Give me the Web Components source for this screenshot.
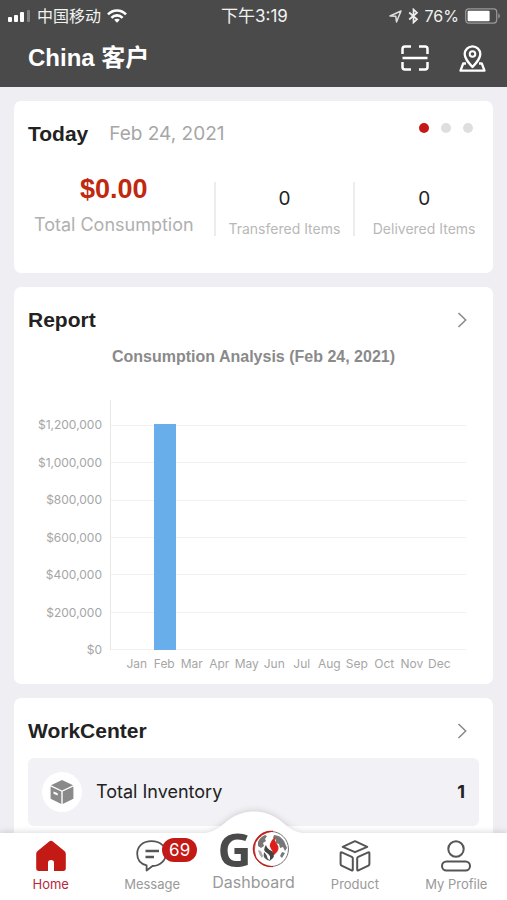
<!DOCTYPE html>
<html lang="en">
<head>
<meta charset="utf-8">
<meta name="viewport" content="width=device-width">
<title>Dashboard</title>
<style>
 html {
  --fontTitle: "Liberation Sans", "Noto Sans CJK SC", sans-serif;
  --fontText: Inter, "Noto Sans CJK SC", sans-serif;
  --red: #c41a16;
  --bar: #4a4a4a;
  --page: #eeeef3;
  --muted: #a6a6a6;
  height: 100%;
 }
 body {
  margin: 0;
  height: 100%;
  background: var(--page);
  color: #222;
  font-family: var(--fontText);
 }
</style>
</head>
<body>
<app-shell>
 <status-bar slot="top" carrier="中国移动" time="下午3:19" battery="76%"></status-bar>
 <app-header slot="top">China 客户</app-header>

 <info-card>
  <span slot="title">Today</span>
  <span slot="note">Feb 24, 2021</span>
  <page-dots slot="action" total="3"></page-dots>
  <stat-row>
   <stat-cell main value="$0.00">Total Consumption</stat-cell>
   <stat-cell value="0">Transfered Items</stat-cell>
   <stat-cell value="0">Delivered Items</stat-cell>
  </stat-row>
 </info-card>

 <info-card>
  <span slot="title">Report</span>
  <more-link slot="action" label="Open report"></more-link>
  <bar-chart values="0,1208000,0,0,0,0,0,0,0,0,0,0" step="200000">Consumption Analysis (Feb 24, 2021)</bar-chart>
 </info-card>

 <info-card>
  <span slot="title">WorkCenter</span>
  <more-link slot="action" label="Open work center"></more-link>
  <work-item count="1">Total Inventory</work-item>
 </info-card>

 <tab-bar slot="bottom">
  <tab-item icon="home" active>Home</tab-item>
  <tab-item icon="message" badge="69">Message</tab-item>
  <tab-item icon="logo">Dashboard</tab-item>
  <tab-item icon="product">Product</tab-item>
  <tab-item icon="profile">My Profile</tab-item>
 </tab-bar>
</app-shell>

<script>
/** Dibujos compartidos por los elementos. */
const ICONS = {
 signal: /* html */ `<svg width="23" height="12" viewBox="0 0 23 12" fill="#fff">
   <rect x="0" y="7" width="4" height="5" rx="1"/><rect x="6" y="5" width="4" height="7" rx="1"/>
   <rect x="12" y="2" width="4" height="10" rx="1"/><rect x="19" y="0" width="3" height="12" rx="1" opacity=".3"/>
  </svg>`,
 wifi: /* html */ `<svg width="20" height="14" viewBox="0 0 20 14" fill="none" stroke="#fff" stroke-width="2.6">
   <path d="M1 5.4C6 .2 14 .2 19 5.4"/><path d="M4.4 8.8c3.2-3.2 8-3.2 11.2 0"/>
   <path d="M7.2 10.8c1.6-1.5 4-1.5 5.6 0L10 13.8z" fill="#fff" stroke="none"/>
  </svg>`,
 arrow: /* html */ `<svg width="13" height="13" viewBox="0 0 13 13" fill="none" stroke="#ddd" stroke-width="1.5" stroke-linejoin="round">
   <path d="M1 6 12 1 7.5 12 6.8 6.3z"/>
  </svg>`,
 bluetooth: /* html */ `<svg width="11" height="16" viewBox="0 0 11 16" fill="none" stroke="#eee" stroke-width="1.7">
   <path d="M1.2 4.5 9 11.3 5.500 14.500V1.500L9 4.7 1.2 11.5"/>
  </svg>`,
 battery: /* html */ `<svg width="36" height="16" viewBox="0 0 36 16">
   <rect x=".7" y=".9" width="31" height="14.2" rx="3" fill="none" stroke="#999" stroke-width="1.2"/>
   <rect x="2.6" y="2.8" width="22" height="10.4" rx="1" fill="#fff"/>
   <path d="M33.3 5.500c2 .6 2 4.4 0 5z" fill="#999"/>
  </svg>`,
 scan: /* html */ `<svg width="28" height="26" viewBox="0 0 28 26" fill="none" stroke="#fff" stroke-width="2.5">
   <path d="M1.500 9V4q0-2.500 2.500-2.500h6M18 1.500h6q2.500 0 2.500 2.500v5M1.500 17v5q0 2.500 2.500 2.500h6M18 24.500h6q2.500 0 2.500-2.500v-5M1.500 13h25"/>
  </svg>`,
 pin: /* html */ `<svg width="27" height="27" viewBox="0 0 27 27" fill="none" stroke="#fff" stroke-width="2.3" stroke-linejoin="round">
   <path d="M13.5 22C9 17 5.700 13.500 5.700 9.200a7.800 7.800 0 0 1 15.600 0C21.300 13.500 18 17 13.500 22z"/>
   <circle cx="13.5" cy="9" r="2.800" stroke-width="2"/>
   <path d="M7 18.500H4.200L1.500 25.700h24l-2.700-7.200H20"/>
  </svg>`,
 chevron: /* html */ `<svg width="10" height="16" viewBox="0 0 10 16" fill="none" stroke="#888" stroke-width="1.5">
   <path d="M1.500 1 8.700 8 1.500 15"/>
  </svg>`,
 box: /* html */ `<svg width="24" height="26" viewBox="0 0 24 26" fill="#8a8a8a">
   <path d="M12 1 23 6.200 12 11.400 1 6.200z"/>
   <path d="M.6 7.600 11.300 12.600V25L.6 19.800zM3.500 12.400v2.300l4.200 1.900v-2.300z" fill-rule="evenodd"/>
   <path d="M23.400 7.600 12.700 12.600V25l10.700-5.200z"/>
  </svg>`,
 home: /* html */ `<svg width="32" height="32" viewBox="0 0 32 32" fill="#c41a16">
   <path d="M14.200 1.400q1.800-1.300 3.600 0L29.400 11q1.400 1.200 1.400 3v14.300q0 2.700-2.700 2.700H19v-8.500q0-2.500-3-2.500t-3 2.500V31H3.900q-2.700 0-2.700-2.700V14q0-1.800 1.400-3z"/>
  </svg>`,
 message: /* html */ `<svg width="32" height="32" viewBox="0 0 32 32" fill="none" stroke="#555" stroke-width="1.8" stroke-linejoin="round">
   <path d="M10.600 30.500V25.400C4.600 23.800 1.200 19.200 1.200 13.700 1.200 6.200 7 1.200 15.500 1.200S30 6.200 30 13.500C30 20 24.500 25.600 16.500 26z"/>
   <path d="M9.500 11h13.500M9.500 17h8.500" stroke-width="2.4"/>
  </svg>`,
 product: /* html */ `<svg width="32" height="32" viewBox="0 0 32 32" fill="none" stroke="#555" stroke-width="2" stroke-linejoin="round">
   <path d="M16 1.200 28.300 6.800 16 12.200 3.700 6.800z"/>
   <path d="M2.800 12.300q-1.200-.5-1.200.8v11q0 1 1 1.500l10 4.800q1.200.5 1.200-.8V18.300q0-1-1-1.500z"/>
   <path d="M29.200 12.300q1.200-.5 1.200.8v11q0 1-1 1.500l-10 4.800q-1.200.5-1.200-.8V18.300q0-1 1-1.500z"/>
  </svg>`,
 profile: /* html */ `<svg width="32" height="32" viewBox="0 0 32 32" fill="none" stroke="#555" stroke-width="2">
   <circle cx="16" cy="9" r="7.700"/><rect x="2" y="21.500" width="28" height="9" rx="4.5"/>
  </svg>`,
 globe: /* html */ `<svg width="38" height="38" viewBox="0 0 38 38">
   <circle cx="19" cy="19" r="17.500" fill="#fff" stroke="#777" stroke-width="1"/>
   <path d="M21 1.200A18 18 0 0 0 4 28.500Q10 37.500 21 36.700 9 35.500 4 27.500 .8 20 3.500 12.500 9 2.500 21 1.200z" fill="#c41a16" stroke="#c41a16" stroke-width=".7"/>
   <path d="M6 12Q8 7 13 5l2 1-2 3 1 2-3 2 1 3-3 2-3-2zM22 5q6 0 10 6l3 7-2 3-2-4-3 1-1-4-4-1 1-3-3-2zM30 22l3 1-3 5-2-2z" fill="#777"/>
   <path d="M6 20l3 1 2 5-1 2q-3-3-4-8z" fill="#aaa"/>
   <path d="M23 7q-1 4 2 7 3 4 0 8-2 3-6 4 3-4 0-7-2-3-1-5 1-4 5-7z" fill="#dc1f1a"/>
   <path d="M14 15q-4 5 1 8 5 3 2 8 8-4 3-10-5-2-6-6z" fill="#444"/>
   <path d="M12 22q-2 8 7 9-4-2-4-5-1-2-3-4z" fill="#555"/>
  </svg>`
}

/** Base: pone estilos y contenido en la sombra abierta. */
class BaseElement extends HTMLElement {
 connectedCallback() {
  if (this.shadowRoot) return
  const template = document.createElement("template")
  template.innerHTML = this.render()
  this.attachShadow({ mode: "open" }).append(template.content.cloneNode(true))
 }
}

customElements.define("app-shell", class extends BaseElement {
 render() {
  return /* html */ `<style>
   :host {
    display: flex;
    flex-direction: column;
    height: 100%;
   }
   header {
    background: var(--bar);
    color: #fff;
   }
   main {
    flex: 1;
    min-height: 0;
    overflow-y: auto;
    scrollbar-width: none;
    display: flex;
    flex-direction: column;
    gap: 14px;
    padding: 14px;
   }
   ::slotted([slot=bottom]) {
    flex: none;
   }
  </style>
  <header><slot name="top"></slot></header>
  <main><slot></slot></main>
  <slot name="bottom"></slot>`
 }
})

customElements.define("status-bar", class extends BaseElement {
 render() {
  return /* html */ `<style>
   :host {
    display: grid;
    grid-template-columns: 1fr auto 1fr;
    align-items: center;
    padding: 4px 6px 0 8px;
    font-size: 16px;
    line-height: 24px;
    color: #f2f2f2;
   }
   div {
    display: flex;
    align-items: center;
    gap: 6px;
   }
   .time {
    font-size: 17px;
   }
   .right {
    justify-content: flex-end;
   }
   svg {
    display: block;
   }
  </style>
  <div>${ICONS.signal}<span>${this.getAttribute("carrier")}</span>${ICONS.wifi}</div>
  <span class="time">${this.getAttribute("time")}</span>
  <div class="right">${ICONS.arrow}${ICONS.bluetooth}<span>${this.getAttribute("battery")}</span>${ICONS.battery}</div>`
 }
})

customElements.define("app-header", class extends BaseElement {
 render() {
  return /* html */ `<style>
   :host {
    display: flex;
    align-items: center;
    justify-content: space-between;
    padding: 12px 21px 11px 28px;
   }
   h1 {
    margin: 0;
    font: bold 24px/36px var(--fontTitle);
   }
   nav {
    display: flex;
    gap: 30px;
   }
   button {
    display: grid;
    place-items: center;
    padding: 0;
    border: 0;
    background: none;
   }
  </style>
  <h1><slot></slot></h1>
  <nav>
   <button type="button" aria-label="Scan">${ICONS.scan}</button>
   <button type="button" aria-label="Location">${ICONS.pin}</button>
  </nav>`
 }
})

customElements.define("info-card", class extends BaseElement {
 render() {
  return /* html */ `<style>
   :host {
    display: block;
    flex: none;
    border-radius: 7px;
    background: #fff;
   }
   header {
    display: flex;
    align-items: center;
    gap: 21px;
    padding: 19px 20px 0 14px;
   }
   h2 {
    margin: 0;
    font: bold 21px/28px var(--fontTitle);
   }
   .note {
    flex: 1;
    font-size: 19px;
    line-height: 28px;
    color: var(--muted);
   }
  </style>
  <header>
   <h2><slot name="title"></slot></h2>
   <span class="note"><slot name="note"></slot></span>
   <slot name="action"></slot>
  </header>
  <slot></slot>`
 }
})

customElements.define("page-dots", class extends BaseElement {
 render() {
  const total = Number(this.getAttribute("total"))
  let inner = ""
  for (let i = 0; i < total; i++) {
   inner += /* html */ `<i></i>`
  }
  return /* html */ `<style>
   :host {
    display: flex;
    gap: 12px;
    align-self: flex-start;
    padding-top: 3px;
   }
   i {
    width: 10px;
    height: 10px;
    border-radius: 50%;
    background: #dedede;
   }
   i:first-of-type {
    background: var(--red);
   }
  </style>${inner}`
 }
})

customElements.define("more-link", class extends BaseElement {
 render() {
  return /* html */ `<style>
   :host {
    display: block;
   }
   a {
    display: block;
    padding: 0 6px;
   }
   svg {
    display: block;
   }
  </style>
  <a href="#" aria-label="${this.getAttribute("label")}">${ICONS.chevron}</a>`
 }
})

customElements.define("stat-row", class extends BaseElement {
 render() {
  return /* html */ `<style>
   :host {
    display: grid;
    grid-template-columns: 10fr 7fr 7fr;
    align-items: end;
    padding: 27px 0 37px;
   }
  </style><slot></slot>`
 }
})

customElements.define("stat-cell", class extends BaseElement {
 render() {
  return /* html */ `<style>
   :host {
    display: flex;
    flex-direction: column;
    align-items: center;
    gap: 11px;
    padding-top: 5px;
    border-left: 2px solid #ececec;
    white-space: nowrap;
   }
   b {
    font-size: 19px;
    font-weight: normal;
    line-height: 24px;
   }
   span {
    font-size: 14px;
    line-height: 14px;
    color: #b8b8b8;
   }
   :host([main]) {
    padding: 0;
    border: 0;
   }
   :host([main]) b {
    font: bold 27px/28px var(--fontTitle);
    color: #c0280f;
   }
   :host([main]) span {
    font-size: 18px;
    line-height: 22px;
    color: #b0b0b0;
   }
  </style>
  <b>${this.getAttribute("value")}</b>
  <span><slot></slot></span>`
 }
})

const MONTHS = ["Jan", "Feb", "Mar", "Apr", "May", "Jun", "Jul", "Aug", "Sep", "Oct", "Nov", "Dec"]

customElements.define("bar-chart", class extends BaseElement {
 render() {
  const values = this.getAttribute("values").split(",").map(Number)
  const step = Number(this.getAttribute("step"))
  const steps = Math.floor(Math.max(...values) / step)
  // dos tercios de paso libres sobre la última línea
  const top = (steps + 2 / 3) * step
  let labels = ""
  let lines = ""
  for (let i = steps; i >= 0; i--) {
   labels += /* html */ `<span>$${(i * step).toLocaleString("en-US")}</span>`
   lines += /* html */ `<hr>`
  }
  const bars = values.map(v => /* html */ `<i style="height:${100 * v / top}%"></i>`).join("")
  const months = MONTHS.map(m => /* html */ `<span>${m}</span>`).join("")
  return /* html */ `<style>
   :host {
    display: block;
    padding: 13px 14px 14px;
    font-size: 12px;
    line-height: 12px;
    color: var(--muted);
   }
   h3 {
    margin: 0 0 33px;
    font: bold 16px/20px var(--fontTitle);
    color: #8a8a8a;
    text-align: center;
   }
   .chart {
    display: grid;
    grid-template-columns: 74px 1fr;
    grid-template-rows: 250px auto;
    gap: 8px;
    padding-right: 13px;
   }
   .labels {
    display: flex;
    flex-direction: column;
    justify-content: space-between;
    text-align: right;
    margin: 19px 0 -6px;
   }
   .plot {
    display: grid;
    border-left: 1px solid #e8e8e8;
   }
   .lines, .bars {
    grid-area: 1 / 1;
   }
   .lines {
    display: flex;
    flex-direction: column;
    justify-content: space-between;
    padding-top: 25px;
   }
   hr {
    width: 100%;
    margin: 0;
    border: 0;
    border-top: 1px solid #f1f1f1;
   }
   .bars, .months {
    display: grid;
    grid-template-columns: repeat(12, 1fr);
    padding: 0 13px;
   }
   .bars {
    align-items: end;
    justify-items: center;
   }
   .months {
    grid-column: 2;
    justify-items: center;
   }
   i {
    width: 80%;
    background: #67aeea;
   }
  </style>
  <h3><slot></slot></h3>
  <div class="chart">
   <div class="labels">${labels}</div>
   <div class="plot">
    <div class="lines">${lines}</div>
    <div class="bars">${bars}</div>
   </div>
   <div class="months">${months}</div>
  </div>`
 }
})

customElements.define("work-item", class extends BaseElement {
 render() {
  return /* html */ `<style>
   :host {
    display: flex;
    align-items: center;
    gap: 14px;
    margin: 13px 14px;
    padding: 14px;
    border-radius: 6px;
    background: #f1f1f6;
    font-size: 18px;
    line-height: 24px;
   }
   .icon {
    display: grid;
    place-items: center;
    width: 40px;
    height: 40px;
    border-radius: 50%;
    background: #fff;
   }
   .name {
    flex: 1;
   }
  </style>
  <span class="icon">${ICONS.box}</span>
  <span class="name"><slot></slot></span>
  <b>${this.getAttribute("count")}</b>`
 }
})

customElements.define("tab-bar", class extends BaseElement {
 render() {
  return /* html */ `<style>
   :host {
    display: block;
    position: relative;
    filter: drop-shadow(0 -1px 3px rgba(0, 0, 0, .14));
   }
   /* joroba sobre las tarjetas, detrás del logotipo */
   .hump {
    position: absolute;
    bottom: 100%;
    left: 50%;
    margin-left: -56px;
    margin-bottom: -1px;
   }
   nav {
    position: relative;
    display: grid;
    grid-template-columns: repeat(5, 1fr);
    background: #fff;
   }
  </style>
  <svg class="hump" width="112" height="23" viewBox="0 0 112 23" fill="#fff">
   <path d="M0 23C18 22 22 15 32 8 46-2 66-2 80 8 90 15 94 22 112 23z"/>
  </svg>
  <nav><slot></slot></nav>`
 }
})

customElements.define("tab-item", class extends BaseElement {
 render() {
  const icon = this.getAttribute("icon")
  const badge = this.getAttribute("badge")
  const picture = icon === "logo"
   ? /* html */ `<span class="logo"><b>G</b>${ICONS.globe}</span>`
   : ICONS[icon]
  return /* html */ `<style>
   :host {
    display: block;
   }
   a {
    display: flex;
    flex-direction: column;
    align-items: center;
    justify-content: flex-end;
    gap: 4px;
    height: 59px;
    padding-bottom: 8px;
    color: #999;
    font-size: 13px;
    line-height: 16px;
    text-decoration: none;
    white-space: nowrap;
   }
   :host([active]) a {
    color: #b8283a;
   }
   :host([icon=logo]) a {
    font-size: 16px;
    line-height: 20px;
   }
   .picture {
    position: relative;
    display: block;
   }
   svg {
    display: block;
   }
   .badge {
    position: absolute;
    left: 26px;
    top: -2px;
    padding: 0 7px;
    border-radius: 12px;
    background: var(--red);
    color: #fff;
    font-size: 17px;
    line-height: 24px;
   }
   .logo {
    display: flex;
    align-items: center;
   }
   .logo b {
    font: bold 47px/38px "Open Sans", sans-serif;
    color: #4a4a4a;
   }
  </style>
  <a href="#">
   <span class="picture">${picture}${badge ? /* html */ `<span class="badge">${badge}</span>` : ""}</span>
   <slot></slot>
  </a>`
 }
})
</script>
</body>
</html>
